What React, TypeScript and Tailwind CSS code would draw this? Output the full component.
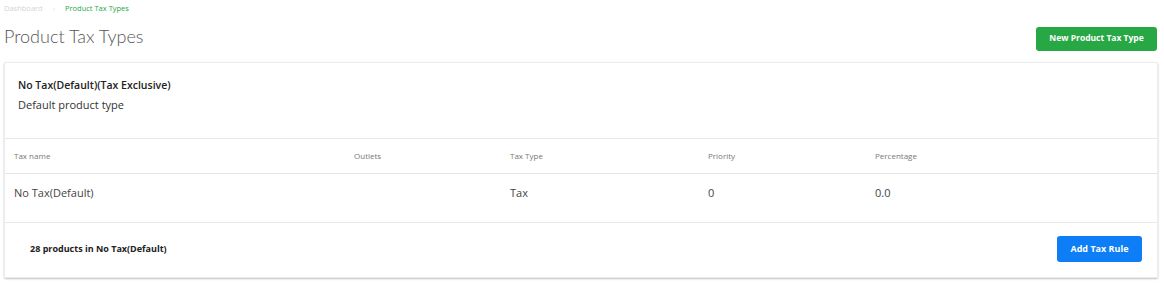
import React from "react";

export default function App() {
  const font = { fontFamily: '"Open Sans", "Noto Sans", Arial, sans-serif' };
  return (
    <div className="w-[1164px] h-[286px] bg-white text-[#333]" style={font}>
      <div className="px-[4px]">
        <div className="flex items-center h-[17px] pt-[1px] text-[7.5px] gap-[10px]">
          <span className="text-[#d4d4d4]">Dashboard</span>
          <span className="text-[#d4d4d4]">›</span>
          <span className="text-[#28a745]">Product Tax Types</span>
        </div>
        <div className="flex items-center justify-between pr-[3px] h-[41px]">
          <h1 className="text-[18px] font-light text-[#555] leading-none -mt-[4px] font-['Lato',sans-serif]">Product Tax Types</h1>
          <button className="bg-[#28a745] text-white text-[8.5px] font-bold rounded-[3px] w-[121px] h-[24px] mt-[2px]">
            New Product Tax Type
          </button>
        </div>
        <div className="mt-[4px] w-[1154px] border border-[#ececec] rounded-[2px] shadow-[0_1px_2px_rgba(0,0,0,0.25)]">
          <div className="h-[76px] px-[13px] pt-[14px] border-b border-[#e8e8e8]">
            <div className="text-[10.5px] font-semibold text-[#222] leading-[16px]">No Tax(Default)(Tax Exclusive)</div>
            <div className="text-[11px] text-[#333] leading-[16px] mt-[4px]">Default product type</div>
          </div>
          <div className="grid grid-cols-[340px_156px_198px_167px_1fr] h-[35px] items-center px-[9px] text-[8px] text-[#777] border-b border-[#e4e4e4]">
            <span>Tax name</span>
            <span>Outlets</span>
            <span>Tax Type</span>
            <span>Priority</span>
            <span>Percentage</span>
          </div>
          <div className="grid grid-cols-[340px_156px_198px_167px_1fr] h-[49px] items-center px-[9px] text-[11px] text-[#444] border-b border-[#e8e8e8] pb-[10px]">
            <span>No Tax(Default)</span>
            <span></span>
            <span>Tax</span>
            <span>0</span>
            <span>0.0</span>
          </div>
          <div className="flex items-center justify-between h-[54px] pl-[25px] pr-[15px] bg-white">
            <span className="text-[9px] font-bold text-[#222] -mt-[2px]">28 products in No Tax(Default)</span>
            <button className="bg-[#0d7ef5] text-white text-[9px] font-bold rounded-[3px] w-[85px] h-[26px] -mt-[2px]">
              Add Tax Rule
            </button>
          </div>
        </div>
      </div>
    </div>
  );
}
